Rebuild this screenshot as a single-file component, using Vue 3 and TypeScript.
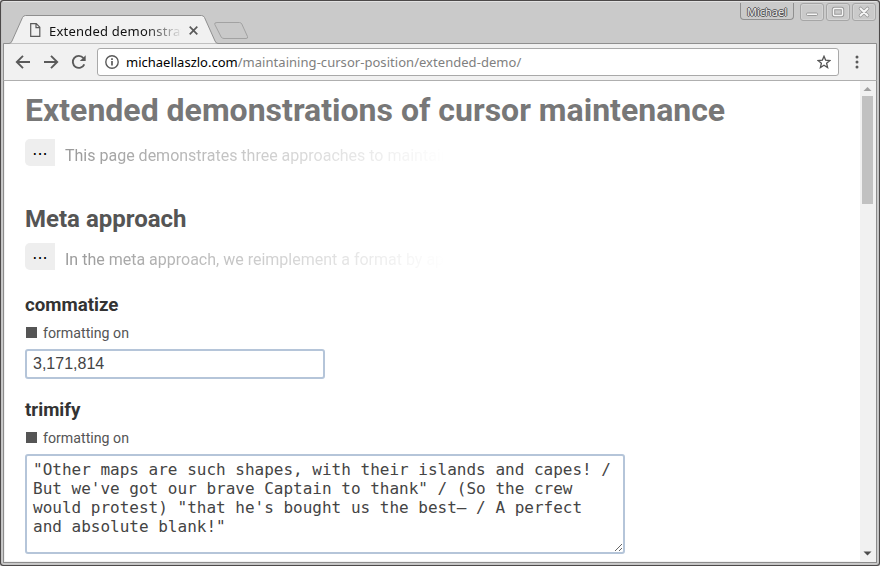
<script setup lang="ts">
import { ref } from 'vue'

const amount = ref('3,171,814')
const verse = ref(
  '"Other maps are such shapes, with their islands and capes! / But we\'ve got our brave Captain to thank" / (So the crew would protest) "that he\'s bought us the best— / A perfect and absolute blank!"',
)
</script>

<template>
  <div class="window">
    <div class="inner">
      <header class="titlebar">
        <svg class="tab-shape" width="876" height="42" viewBox="2 2 876 42">
          <path d="M3.500 44V43.500H9Q11 43.500 12 41L22.500 17.500Q23.500 15.500 25.500 15.500H201.500Q203.500 15.500 204.500 17.500L215 41Q216 43.500 218 43.500H876.500V44Z" fill="#f1f1f1" stroke="#8f8f8f" />
          <path d="M217 22.500H239.500Q241 22.500 241.800 24L247.500 36.500Q248.300 38.500 246 38.500H224Q222 38.500 221.200 37L214.800 24.500Q214 22.500 217 22.500Z" fill="#c9c9c9" stroke="#a2a2a2" />
        </svg>
        <div class="tab">
          <svg class="page-icon" width="12" height="15" viewBox="0 0 12 15"><path d="M.7 .7H6.300L9.800 4.200V13.300H.7ZM6 .7V4.600H9.800" fill="none" stroke="#5a5a5a" stroke-width="1.200" /></svg>
          <span class="tab-title">Extended demonstrations</span>
          <svg class="close-tab" width="9" height="9" viewBox="0 0 9 9"><path d="M.7 .7L8.300 8.300M8.300 .7L.7 8.300" stroke="#5a5a5a" stroke-width="1.700" /></svg>
        </div>
        <div class="controls">
          <span class="profile">Michael</span>
          <span class="control"><svg width="22" height="16" viewBox="0 0 22 16"><rect x="5.500" y="9" width="11" height="2.500" rx="1" fill="#f6f6f6" stroke="#999" /></svg></span>
          <span class="control"><svg width="22" height="16" viewBox="0 0 22 16"><rect x="6.500" y="4.500" width="9" height="7" rx="1" fill="none" stroke="#999" stroke-width="3.400" /><rect x="6.500" y="4.500" width="9" height="7" rx="1" fill="none" stroke="#f6f6f6" stroke-width="1.400" /></svg></span>
          <span class="control"><svg width="22" height="16" viewBox="0 0 22 16"><path d="M7.500 4.500L14.500 11.500M14.500 4.500L7.500 11.500" stroke="#999" stroke-width="3.600" stroke-linecap="round" /><path d="M7.500 4.500L14.500 11.500M14.500 4.500L7.500 11.500" stroke="#f6f6f6" stroke-width="2" stroke-linecap="round" /></svg></span>
        </div>
      </header>

      <nav class="toolbar">
        <div class="nav-icons">
          <svg width="16" height="16" viewBox="0 0 16 16"><path d="M15 8H2M8 1.800L1.800 8L8 14.200" fill="none" stroke="#5a5a5a" stroke-width="1.900" /></svg>
          <svg width="16" height="16" viewBox="0 0 16 16"><path d="M1 8H14M8 1.800L14.200 8L8 14.200" fill="none" stroke="#5a5a5a" stroke-width="1.900" /></svg>
          <svg width="16" height="16" viewBox="0 0 16 16"><path d="M13.300 10.300A6 6 0 1 1 12.400 4" fill="none" stroke="#5a5a5a" stroke-width="1.900" /><path d="M14.700 1.200V7H8.800Z" fill="#5a5a5a" /></svg>
        </div>
        <div class="address">
          <svg width="14" height="14" viewBox="0 0 14 14"><circle cx="7" cy="7" r="6.200" fill="none" stroke="#5a5a5a" stroke-width="1.400" /><path d="M7 3.300V4.900M7 6V10.600" stroke="#5a5a5a" stroke-width="1.700" /></svg>
          <span class="url"><b>michaellaszlo.com</b>/maintaining-cursor-position/extended-demo/</span>
          <svg class="star" width="14" height="14" viewBox="0 0 14 14"><path d="M7 1.300L8.600 5.100L12.900 5.500L9.600 8.200L10.600 12.500L7 10.200L3.400 12.500L4.400 8.200L1.100 5.500L5.400 5.100Z" fill="none" stroke="#555" stroke-width="1.300" /></svg>
        </div>
        <svg class="menu" width="4" height="14" viewBox="0 0 4 14"><circle cx="2" cy="2" r="1.500" fill="#5a5a5a" /><circle cx="2" cy="7" r="1.500" fill="#5a5a5a" /><circle cx="2" cy="12" r="1.500" fill="#5a5a5a" /></svg>
      </nav>

      <div class="viewport">
        <main class="page">
          <h1>Extended demonstrations of cursor maintenance</h1>
          <div class="summary first">
            <button type="button">...</button>
            <p>This page demonstrates three approaches to maintaining</p>
          </div>
          <h2>Meta approach</h2>
          <div class="summary second">
            <button type="button">...</button>
            <p>In the meta approach, we reimplement a format by applying</p>
          </div>
          <section class="demo">
            <h3>commatize</h3>
            <div class="toggle"><i></i>formatting on</div>
            <input v-model="amount" type="text" />
          </section>
          <section class="demo">
            <h3>trimify</h3>
            <div class="toggle"><i></i>formatting on</div>
            <textarea v-model="verse" spellcheck="false"></textarea>
          </section>
        </main>
        <aside class="scrollbar">
          <svg width="15" height="15" viewBox="0 0 15 15"><path d="M3.500 10L7.500 6L11.500 10Z" fill="#a0a0a0" /></svg>
          <div class="thumb"></div>
          <svg class="down" width="15" height="15" viewBox="0 0 15 15"><path d="M3.500 5.500H11.500L7.500 9.500Z" fill="#4d4d4d" /></svg>
        </aside>
      </div>
    </div>
  </div>
</template>

<style>
body {
  background: #ddd;
  overflow: hidden;
}
</style>

<style scoped>
* {
  box-sizing: border-box;
}
.window {
  width: 880px;
  height: 566px;
  padding: 1px;
  background: #4c4949;
  border-radius: 3px;
}
.inner {
  height: 564px;
  border: 1px solid #c4c4c4;
  border-top-color: #e2e2e2;
  border-radius: 3px;
  background: #cacaca;
  display: flex;
  flex-direction: column;
  overflow: hidden;
}
.titlebar {
  height: 42px;
  flex: none;
  position: relative;
  display: flex;
  justify-content: space-between;
}
.tab-shape {
  position: absolute;
  left: 0;
  top: 0;
}
.tab {
  position: relative;
  display: flex;
  align-items: center;
  height: 29px;
  margin: 14px 0 0 28px;
}
.page-icon {
  flex: none;
  margin-right: 7px;
}
.tab-title {
  width: 132px;
  overflow: hidden;
  white-space: nowrap;
  font: 13px/20px "Noto Sans", sans-serif;
  letter-spacing: 0.22px;
  color: #111;
  mask-image: linear-gradient(to right, #000 96px, transparent 134px);
}
.close-tab {
  margin-left: 8px;
}
.controls {
  position: relative;
  display: flex;
  padding: 1px 2px 0 0;
  gap: 2px;
}
.profile {
  width: 54px;
  height: 17px;
  margin-right: 4px;
  border: 1px solid #8f8f8f;
  border-top: 0;
  border-radius: 0 0 4px 4px;
  text-align: center;
  font: 11px/17px "Noto Sans", sans-serif;
  color: #eee;
  text-shadow: 0 1px 0 #555, 1px 0 0 #555, 0 -1px 0 #555, -1px 0 0 #555;
}
.control {
  width: 24px;
  height: 18px;
  border: 1px solid #a6a6a6;
  border-radius: 3px;
  box-shadow: inset 0 0 0 1px #d4d4d4;
  display: flex;
}
.toolbar {
  height: 37px;
  flex: none;
  margin: 0 1px;
  background: #f1f1f1;
  border-bottom: 1px solid #afafaf;
  border-left: 1px solid #909090;
  border-right: 1px solid #909090;
  display: flex;
  align-items: center;
}
.nav-icons {
  display: flex;
  gap: 12px;
  padding-left: 11px;
  margin-right: 10px;
}
.address {
  width: 742px;
  height: 28px;
  border: 1px solid #a9a9a9;
  border-radius: 3px;
  background: #fff;
  display: flex;
  align-items: center;
  padding: 0 7px;
}
.url {
  margin-left: 7px;
  font: 13px/20px "Noto Sans", sans-serif;
  letter-spacing: 0.04px;
  color: #808080;
}
.url b {
  font-weight: 400;
  letter-spacing: 0;
  color: #000;
}
.star {
  margin-left: auto;
}
.menu {
  margin-left: 16px;
}
.viewport {
  height: 482px;
  margin: 0 1px;
  border: 1px solid #8c8c8c;
  border-top: 0;
  padding: 0 1px 1px;
  display: flex;
  background: linear-gradient(#fff, #fff) content-box, #f1f1f1;
}
.page {
  flex: 1;
  padding: 10px 0 0 20px;
  overflow: hidden;
  font-family: Roboto, sans-serif;
  color: #444;
}
h1,
h2,
h3,
p {
  margin: 0;
}
h1 {
  font-size: 32px;
  line-height: 38px;
  color: #777;
}
h2 {
  font-size: 24px;
  line-height: 28px;
  color: #555;
}
h3 {
  font-size: 18.720px;
  line-height: 22px;
  color: #333;
}
.summary {
  display: flex;
  height: 27px;
}
.first {
  margin: 10px 0 39px;
}
.second {
  margin: 10px 0 24px;
}
.summary button {
  width: 30px;
  height: 27px;
  padding: 0 0 5px;
  border: 0;
  border-radius: 5px 0 0 5px;
  background: #eee;
  font: 16px/22px "DejaVu Sans", sans-serif;
  color: #000;
}
.summary p {
  width: 380px;
  margin-left: 10px;
  overflow: hidden;
  white-space: nowrap;
  font-size: 16px;
  line-height: 33px;
  height: 33px;
  color: #999;
  mask-image: linear-gradient(to right, #000, transparent);
}
.demo {
  margin-bottom: 20px;
}
.toggle {
  display: flex;
  align-items: center;
  height: 20px;
  margin: 7px 0 6px 1px;
  font-size: 14.200px;
  color: #555;
}
.toggle i {
  width: 11px;
  height: 11px;
  margin: 0 6px 2px 0;
  background: #555;
}
input,
textarea {
  display: block;
  border: 2px solid #b5c5d9;
  border-radius: 3px;
  outline: 0;
  background: #fff;
  color: #444;
}
input {
  width: 300px;
  height: 30px;
  padding: 0 6px;
  font: 16px "Liberation Sans", sans-serif;
}
textarea {
  width: 600px;
  height: 100px;
  padding: 4px 6px;
  overflow: hidden;
  font: 16px/19px "DejaVu Sans Mono", monospace;
}
.scrollbar {
  width: 15px;
  background: #f1f1f1;
  display: flex;
  flex-direction: column;
}
.thumb {
  width: 11px;
  height: 108px;
  margin-left: 2px;
  background: #c1c1c1;
}
.down {
  margin-top: auto;
}
</style>
